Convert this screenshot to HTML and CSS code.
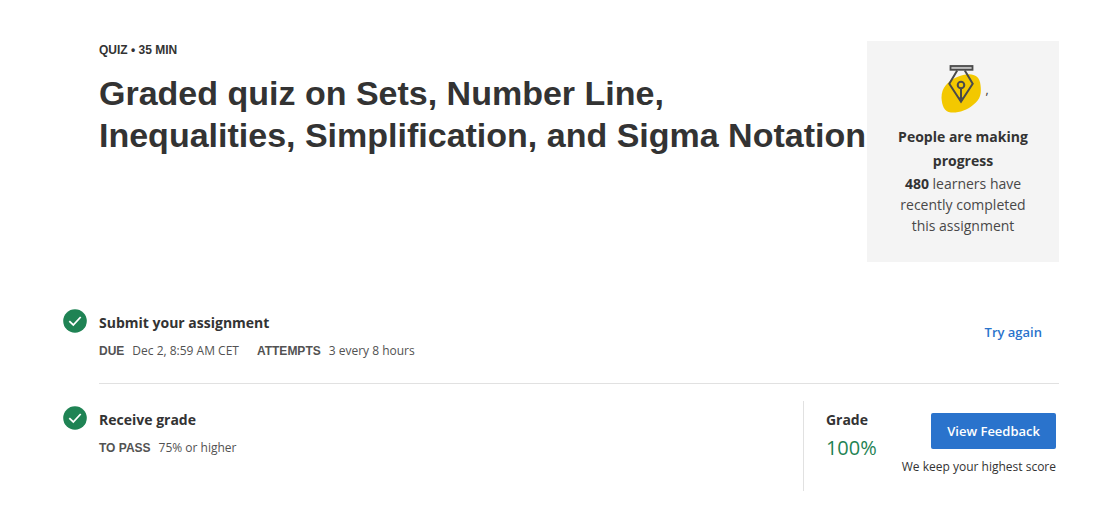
FILE: index.html
```html
<!DOCTYPE html>
<html lang="en">
<head>
<meta charset="utf-8">
<meta name="viewport" content="width=device-width, initial-scale=1">
<title>Graded quiz</title>
<link rel="stylesheet" href="styles.css">
</head>
<body>
<main class="page">
  <header class="header">
    <div class="intro">
      <p class="kicker">QUIZ • 35 MIN</p>
      <h1 class="title">Graded quiz on Sets, Number Line, Inequalities, Simplification, and Sigma Notation</h1>
    </div>
    <aside class="progress">
      <div class="progress-art">
        <svg class="pen" viewBox="-2 0 48 48" width="48" height="48" aria-hidden="true">
          <path d="M27 9.500C34 8 41 11 41.500 20C42.500 28 42 34 34 40C28 45 20 48 12 47.500C5 47 3 40 2.500 33C2.500 22 9 17 16 13C20 11 23 10 27 9.500Z" fill="#f3c800"/>
          <path d="M18.200 5.500L10.300 18.700L22 36.700L33.700 18.700L25.800 5.500M22 23V37" fill="none" stroke="#4a4a4a" stroke-width="2"/>
          <rect x="11.500" y="1" width="22" height="3.800" fill="#bdbdbd" stroke="#4a4a4a" stroke-width="1.800"/>
          <circle cx="22" cy="20" r="3.300" fill="none" stroke="#4a4a4a" stroke-width="2"/>
          <path d="M19.500 32.500L22 37.500L24.500 32.500Z" fill="#4a4a4a"/>
        </svg>
        <span class="comma">,</span>
      </div>
      <h2 class="progress-title">People are making progress</h2>
      <p class="progress-text"><strong>480</strong> learners have recently completed this assignment</p>
    </aside>
  </header>

  <section class="step">
    <svg class="check" viewBox="0 0 24 24" width="24" height="24" role="img" aria-label="Completed"><circle cx="12" cy="12" r="11.800" fill="#1f8354"/><path d="M6.300 12.200L10.300 16L17.700 8" fill="none" stroke="#fff" stroke-width="1.800"/></svg>
    <div class="step-body step-submit">
      <div class="step-info">
        <h2 class="step-title">Submit your assignment</h2>
        <dl class="facts">
          <div class="fact"><dt>DUE</dt><dd>Dec 2, 8:59 AM CET</dd></div>
          <div class="fact"><dt>ATTEMPTS</dt><dd>3 every 8 hours</dd></div>
        </dl>
      </div>
      <a class="retry" href="#">Try again</a>
    </div>
  </section>

  <section class="step">
    <svg class="check" viewBox="0 0 24 24" width="24" height="24" role="img" aria-label="Completed"><circle cx="12" cy="12" r="11.800" fill="#1f8354"/><path d="M6.300 12.200L10.300 16L17.700 8" fill="none" stroke="#fff" stroke-width="1.800"/></svg>
    <div class="step-body">
      <div class="step-info">
        <h2 class="step-title">Receive grade</h2>
        <dl class="facts">
          <div class="fact"><dt>TO PASS</dt><dd>75% or higher</dd></div>
        </dl>
      </div>
      <div class="result">
        <div class="grade">
          <h3 class="step-title">Grade</h3>
          <p class="score">100%</p>
        </div>
        <div class="feedback">
          <button class="button" type="button">View Feedback</button>
          <p class="note">We keep your highest score</p>
        </div>
      </div>
    </div>
  </section>
</main>
</body>
</html>
```

FILE: styles.css
```css
* {
  box-sizing: border-box;
}

body,
h1,
h2,
h3,
p,
dl,
dd {
  margin: 0;
}

body {
  background: #fff;
  color: #333;
  font-family: "Open Sans", "Liberation Sans", sans-serif;
  font-size: 14px;
}

.page {
  padding: 41px 49px 16px 63px;
}

.header {
  display: flex;
  align-items: flex-start;
  padding-left: 36px;
  margin-bottom: 42px;
}

.intro {
  flex: 1;
}

.kicker {
  font: bold 12px/18px "Liberation Sans", Arial, sans-serif;
}

.title {
  margin-top: 13px;
  font: bold 34px/42px "Liberation Sans", Arial, sans-serif;
}

.progress {
  flex: 0 0 192px;
  padding: 24px 24px 26px;
  background: #f4f4f4;
  text-align: center;
}

.progress-art {
  display: flex;
  align-items: center;
  justify-content: center;
  margin-bottom: 12px;
}

.comma {
  font-size: 12px;
}

.progress-title {
  font-size: 14px;
  font-weight: 700;
  line-height: 24px;
}

.progress-text {
  color: #484848;
  line-height: 21px;
}

.progress-text strong {
  color: #333;
}

.step {
  display: flex;
  align-items: flex-start;
  gap: 12px;
}

.check {
  flex: none;
  margin-top: 5px;
}

.step-body {
  flex: 1;
  display: flex;
  justify-content: space-between;
}

.step-submit {
  padding-bottom: 16px;
  margin-bottom: 17px;
  border-bottom: 1px solid #e1e1e1;
}

.step-info {
  padding: 8px 0 7px;
}

.step-title {
  font-size: 14px;
  font-weight: 700;
  line-height: 22px;
}

.facts {
  display: flex;
  gap: 18px;
  margin-top: 8px;
  font-size: 12px;
  line-height: 18px;
  color: #525252;
}

.fact {
  display: flex;
  gap: 8px;
}

.fact dt {
  font-family: "Liberation Sans", Arial, sans-serif;
  font-weight: 700;
}

.retry {
  padding: 17px 17px 0 0;
  color: #2a73cc;
  font-size: 13px;
  font-weight: 600;
  line-height: 22px;
  text-decoration: none;
}

.result {
  display: flex;
  gap: 25px;
  min-height: 90px;
  padding: 8px 3px 0 22px;
  border-left: 1px solid #e1e1e1;
}

.score {
  margin-top: 3px;
  color: #1f8354;
  font-size: 20px;
  line-height: 28px;
}

.feedback {
  padding-top: 4px;
  text-align: right;
}

.button {
  height: 36px;
  padding: 0 16px;
  border: 0;
  border-radius: 2px;
  background: #2a73cc;
  color: #fff;
  font: 600 13px/18px "Open Sans", "Liberation Sans", sans-serif;
}

.note {
  margin-top: 9px;
  font-size: 12px;
  line-height: 18px;
}
```
